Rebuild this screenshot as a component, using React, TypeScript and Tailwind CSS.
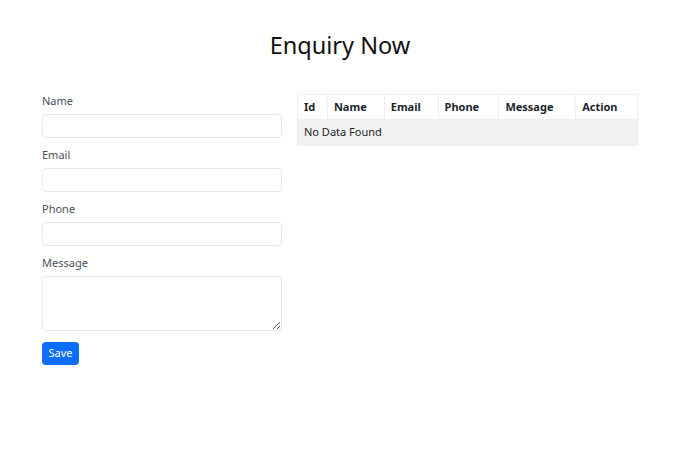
import React from "react";

const font = { fontFamily: '"Noto Sans", "Open Sans", sans-serif' };

function Field({ label, textarea }: { label: string; textarea?: boolean }) {
  return (
    <div className="flex flex-col">
      <label className="text-[11px] leading-[16px] text-[#495057] mb-[5px]">{label}</label>
      {textarea ? (
        <textarea className="w-[240px] h-[55px] border border-[#e6e8ea] rounded-[4px] bg-white resize-y" />
      ) : (
        <input className="w-[240px] h-[24px] border border-[#e6e8ea] rounded-[4px] bg-white" />
      )}
    </div>
  );
}

export default function App() {
  const cols: [string, number][] = [
    ["Id", 30],
    ["Name", 57],
    ["Email", 54],
    ["Phone", 61],
    ["Message", 77],
    ["Action", 62],
  ];
  return (
    <div className="w-[680px] h-[455px] bg-white text-[#212529]" style={font}>
      <h1 className="text-center text-[23.5px] leading-[28px] font-normal pt-[31px] text-[#111]">Enquiry Now</h1>
      <div className="flex mt-[35px] pl-[42px] gap-[15px]">
        <div className="flex flex-col w-[240px] gap-[9px] -mt-[1px]">
          <Field label="Name" />
          <Field label="Email" />
          <Field label="Phone" />
          <Field label="Message" textarea />
          <div className="flex pt-[2px]">
            <button className="bg-[#0d6efd] text-white text-[11px] rounded-[4px] w-[37px] h-[23px]">Save</button>
          </div>
        </div>
        <div className="w-[341px]">
          <table className="w-full border-collapse text-[11px]">
            <thead>
              <tr className="h-[25px]">
                {cols.map(([c, w]) => (
                  <th
                    key={c}
                    style={{ width: w }}
                    className="text-left font-bold px-[6px] border border-[#eceeef] text-[#212529]"
                  >
                    {c}
                  </th>
                ))}
              </tr>
            </thead>
            <tbody>
              <tr className="h-[26px] bg-[#f2f2f2]">
                <td colSpan={6} className="px-[6px] border border-[#eceeef]">
                  No Data Found
                </td>
              </tr>
            </tbody>
          </table>
        </div>
      </div>
    </div>
  );
}
